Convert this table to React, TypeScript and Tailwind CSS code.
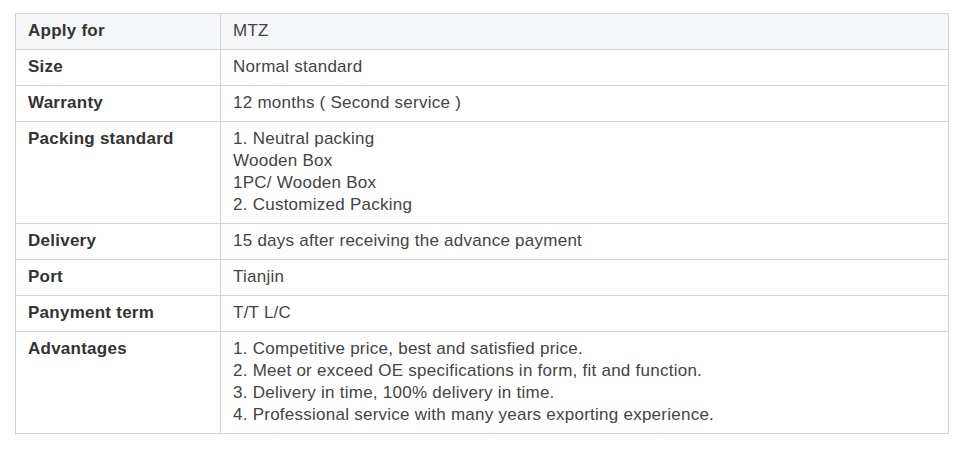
const rows: { label: string; value: string[] }[] = [
  { label: "Apply for", value: ["MTZ"] },
  { label: "Size", value: ["Normal standard"] },
  { label: "Warranty", value: ["12 months ( Second service )"] },
  {
    label: "Packing standard",
    value: ["1. Neutral packing", "Wooden Box", "1PC/ Wooden Box", "2. Customized Packing"],
  },
  { label: "Delivery", value: ["15 days after receiving the advance payment"] },
  { label: "Port", value: ["Tianjin"] },
  { label: "Panyment term", value: ["T/T L/C"] },
  {
    label: "Advantages",
    value: [
      "1. Competitive price, best and satisfied price.",
      "2. Meet or exceed OE specifications in form, fit and function.",
      "3. Delivery in time, 100% delivery in time.",
      "4. Professional service with many years exporting experience.",
    ],
  },
];

export default function App() {
  return (
    <div className="bg-white min-h-screen pt-[13px] px-[15px] font-['Liberation_Sans',Arial,sans-serif] text-[17px] tracking-[0.25px] leading-[22px] text-[#333]">
      <table className="w-[934px] border-collapse">
        <tbody>
          {rows.map((r, i) => (
            <tr key={r.label} className={i === 0 ? "bg-[#f5f6f8]" : ""}>
              <td className="w-[205px] border border-[#d4d4d4] align-top px-[12px] pt-[6px] pb-[7px] font-bold">
                {r.label}
              </td>
              <td className="border border-[#d4d4d4] align-top px-[12px] pt-[6px] pb-[7px] text-[#444]">
                {r.value.map((v) => (
                  <div key={v}>{v}</div>
                ))}
              </td>
            </tr>
          ))}
        </tbody>
      </table>
    </div>
  );
}
